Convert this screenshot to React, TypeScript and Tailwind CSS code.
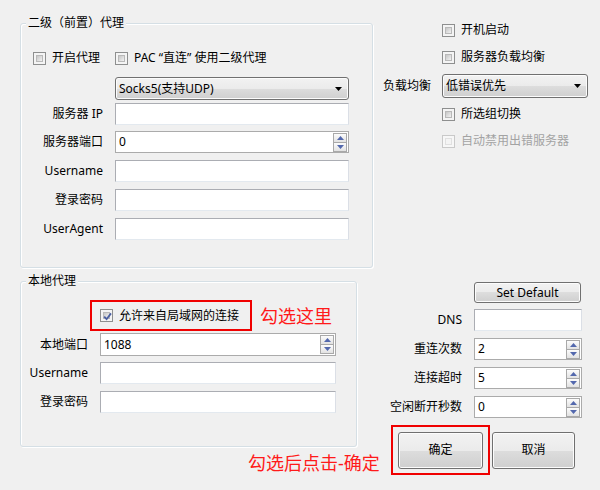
import React from "react";

function CheckBox({ checked = false, disabled = false }: { checked?: boolean; disabled?: boolean }) {
    return (
        <span
            className={`relative flex h-[13px] w-[13px] shrink-0 p-[2px] border ${disabled ? "border-[#c9c9c9] bg-[#f7f7f7]" : "border-[#8e8f8f] bg-[#f4f4f4]"
                }`}
        >
            <span
                className={`block h-full w-full border ${disabled
                        ? "border-[#e0e0e0] bg-[#f4f4f4]"
                        : "border-[#b9b9b9] bg-[linear-gradient(135deg,#c6c6c6,#f2f2f2)]"
                    }`}
            />
            {checked && (
                <svg viewBox="0 0 11 11" className="absolute left-[1px] top-[1px] h-[11px] w-[11px]">
                    <path d="M2.2 5.6 L4.6 8.2 L9 2.4" fill="none" stroke="#4a5fa0" strokeWidth="1.8" />
                </svg>
            )}
        </span>
    );
}

function Check({ label, checked, disabled }: { label: string; checked?: boolean; disabled?: boolean }) {
    return (
        <div className="flex h-[16px] items-center gap-[6px]">
            <CheckBox checked={checked} disabled={disabled} />
            <span className={`whitespace-pre ${disabled ? "text-[#a3a3a3]" : "text-black"}`}>{label}</span>
        </div>
    );
}

function TextBox({ value = "", className = "" }: { value?: string; className?: string }) {
    return (
        <div
            className={`flex h-[22px] items-center border border-[#abadb3] border-b-[#e3e9ef] border-r-[#dbdfe6] bg-white pl-[3px] ${className}`}
        >
            {value}
        </div>
    );
}

function SpinBtn({ up }: { up?: boolean }) {
    return (
        <div className={`flex h-[10px] w-[14px] items-center justify-center border border-[#a9a9a9] bg-[linear-gradient(#fcfcfc,#e2e2e2)] ${up ? "" : "-mt-px"}`}>
            <svg viewBox="0 0 7 4" className="h-[4px] w-[7px]">
                {up ? <path d="M0 4 L3.5 0 L7 4 Z" fill="#5368ad" /> : <path d="M0 0 L3.5 4 L7 0 Z" fill="#5368ad" />}
            </svg>
        </div>
    );
}

function SpinBox({ value, className = "" }: { value: string; className?: string }) {
    return (
        <div className={`flex items-center border border-[#ababab] bg-white pl-[3px] pr-[1px] ${className}`}>
            <span className="flex-1">{value}</span>
            <div className="flex flex-col">
                <SpinBtn up />
                <SpinBtn />
            </div>
        </div>
    );
}

function Combo({ value, className = "" }: { value: string; className?: string }) {
    return (
        <div
            className={`flex items-center justify-between rounded-[3px] border border-[#707070] bg-[linear-gradient(to_bottom,#f2f2f2_0%,#ebebeb_50%,#dddddd_50%,#cfcfcf_100%)] pl-[3px] pr-[6px] shadow-[inset_0_0_0_1px_#fcfcfc] ${className}`}
        >
            <span>{value}</span>
            <svg viewBox="0 0 7 4" className="h-[4px] w-[7px]">
                <path d="M0 0 L3.5 4 L7 0 Z" fill="#000" />
            </svg>
        </div>
    );
}

function Button({ label, className = "" }: { label: string; className?: string }) {
    return (
        <div
            className={`flex items-center justify-center rounded-[3px] border border-[#707070] bg-[linear-gradient(to_bottom,#f2f2f2_0%,#ebebeb_50%,#dddddd_50%,#cfcfcf_100%)] shadow-[inset_0_0_0_1px_#fcfcfc] ${className}`}
        >
            {label}
        </div>
    );
}

function Group({ title, className = "", children }: { title: string; className?: string; children: React.ReactNode }) {
    return (
        <div className={`relative rounded-[3px] border border-[#d5dfe5] shadow-[inset_1px_1px_0_#fff,1px_1px_0_#fff] ${className}`}>
            <span className="absolute -top-[9px] left-[5px] bg-[#f0f0f0] px-[2px] leading-[16px]">{title}</span>
            {children}
        </div>
    );
}

function Row({ label, labelW, children, className = "" }: { label: string; labelW: string; children: React.ReactNode; className?: string }) {
    return (
        <div className={`flex items-center ${className}`}>
            <span className={`text-right ${labelW}`}>{label}</span>
            {children}
        </div>
    );
}

export default function App() {
    return (
        <div className="h-[490px] w-[600px] overflow-hidden bg-[#f0f0f0] font-['Noto_Sans','Noto_Sans_CJK_SC',sans-serif] text-[12px] leading-[16px] text-black">
            {/* top section */}
            <div className="flex">
                <Group title="二级（前置）代理" className="ml-[20px] mt-[23px] h-[245px] w-[353px]">
                    <div className="mt-[26px] flex pl-[12px]">
                        <div className="w-[82px]">
                            <Check label="开启代理" />
                        </div>
                        <Check label="PAC “直连” 使用二级代理" />
                    </div>
                    <div className="mt-[11px] pl-[94px]">
                        <Combo value="Socks5(支持UDP)" className="h-[23px] w-[234px]" />
                    </div>
                    <Row label="服务器 IP" labelW="w-[82px]" className="mt-[3px]">
                        <TextBox className="ml-[12px] w-[234px]" />
                    </Row>
                    <Row label="服务器端口" labelW="w-[82px]" className="mt-[6px]">
                        <SpinBox value="0" className="ml-[12px] h-[22px] w-[234px]" />
                    </Row>
                    <Row label="Username" labelW="w-[82px]" className="mt-[7px]">
                        <TextBox className="ml-[12px] w-[234px]" />
                    </Row>
                    <Row label="登录密码" labelW="w-[82px]" className="mt-[7px]">
                        <TextBox className="ml-[12px] w-[234px]" />
                    </Row>
                    <Row label="UserAgent" labelW="w-[82px]" className="mt-[7px]">
                        <TextBox className="ml-[12px] w-[234px]" />
                    </Row>
                </Group>

                <div className="flex flex-col">
                    <div className="mt-[22px] pl-[69px]">
                        <Check label="开机启动" />
                    </div>
                    <div className="mt-[11px] pl-[69px]">
                        <Check label="服务器负载均衡" />
                    </div>
                    <div className="mt-[9px] flex items-center pl-[10px]">
                        <span className="w-[59px]">负载均衡</span>
                        <Combo value="低错误优先" className="h-[24px] w-[146px]" />
                    </div>
                    <div className="mt-[8px] pl-[69px]">
                        <Check label="所选组切换" />
                    </div>
                    <div className="mt-[11px] pl-[69px]">
                        <Check label="自动禁用出错服务器" disabled />
                    </div>
                </div>
            </div>

            {/* bottom section */}
            <div className="flex">
                <div className="flex w-[357px] shrink-0 flex-col">
                    <Group title="本地代理" className="ml-[20px] mt-[13px] h-[166px] w-[337px]">
                        <div className="mt-[18px] flex items-center">
                            <div className="ml-[69px] flex h-[31px] w-[162px] items-center gap-[6px] border-2 border-[#f00000] pl-[8px]">
                                <CheckBox checked />
                                <span>允许来自局域网的连接</span>
                            </div>
                            <span className="ml-[8px] text-[18px] leading-[24px] text-[#ff1a1a]">勾选这里</span>
                        </div>
                        <Row label="本地端口" labelW="w-[67px]" className="mt-[2px]">
                            <SpinBox value="1088" className="ml-[12px] h-[23px] w-[236px]" />
                        </Row>
                        <Row label="Username" labelW="w-[67px]" className="mt-[6px]">
                            <TextBox className="ml-[12px] w-[236px]" />
                        </Row>
                        <Row label="登录密码" labelW="w-[67px]" className="mt-[7px]">
                            <TextBox className="ml-[12px] w-[236px]" />
                        </Row>
                    </Group>
                    <span className="ml-[248px] mt-[4px] whitespace-nowrap text-[18px] leading-[24px] text-[#ff1a1a]">
                        勾选后点击-确定
                    </span>
                </div>

                <div className="flex flex-col">
                    <Button label="Set Default" className="ml-[117px] mt-[14px] h-[21px] w-[107px]" />
                    <Row label="DNS" labelW="w-[105px]" className="mt-[6px]">
                        <TextBox className="ml-[12px] w-[108px]" />
                    </Row>
                    <Row label="重连次数" labelW="w-[105px]" className="mt-[7px]">
                        <SpinBox value="2" className="ml-[12px] h-[22px] w-[108px]" />
                    </Row>
                    <Row label="连接超时" labelW="w-[105px]" className="mt-[7px]">
                        <SpinBox value="5" className="ml-[12px] h-[22px] w-[108px]" />
                    </Row>
                    <Row label="空闲断开秒数" labelW="w-[105px]" className="mt-[7px]">
                        <SpinBox value="0" className="ml-[12px] h-[22px] w-[108px]" />
                    </Row>
                    <div className="mt-[7px] flex items-center">
                        <div className="ml-[34px] flex h-[50px] w-[99px] items-center border-2 border-[#f00000] pl-[5px]">
                            <Button label="确定" className="h-[37px] w-[85px]" />
                        </div>
                        <Button label="取消" className="ml-[2px] h-[37px] w-[83px]" />
                    </div>
                </div>
            </div>
        </div>
    );
}
